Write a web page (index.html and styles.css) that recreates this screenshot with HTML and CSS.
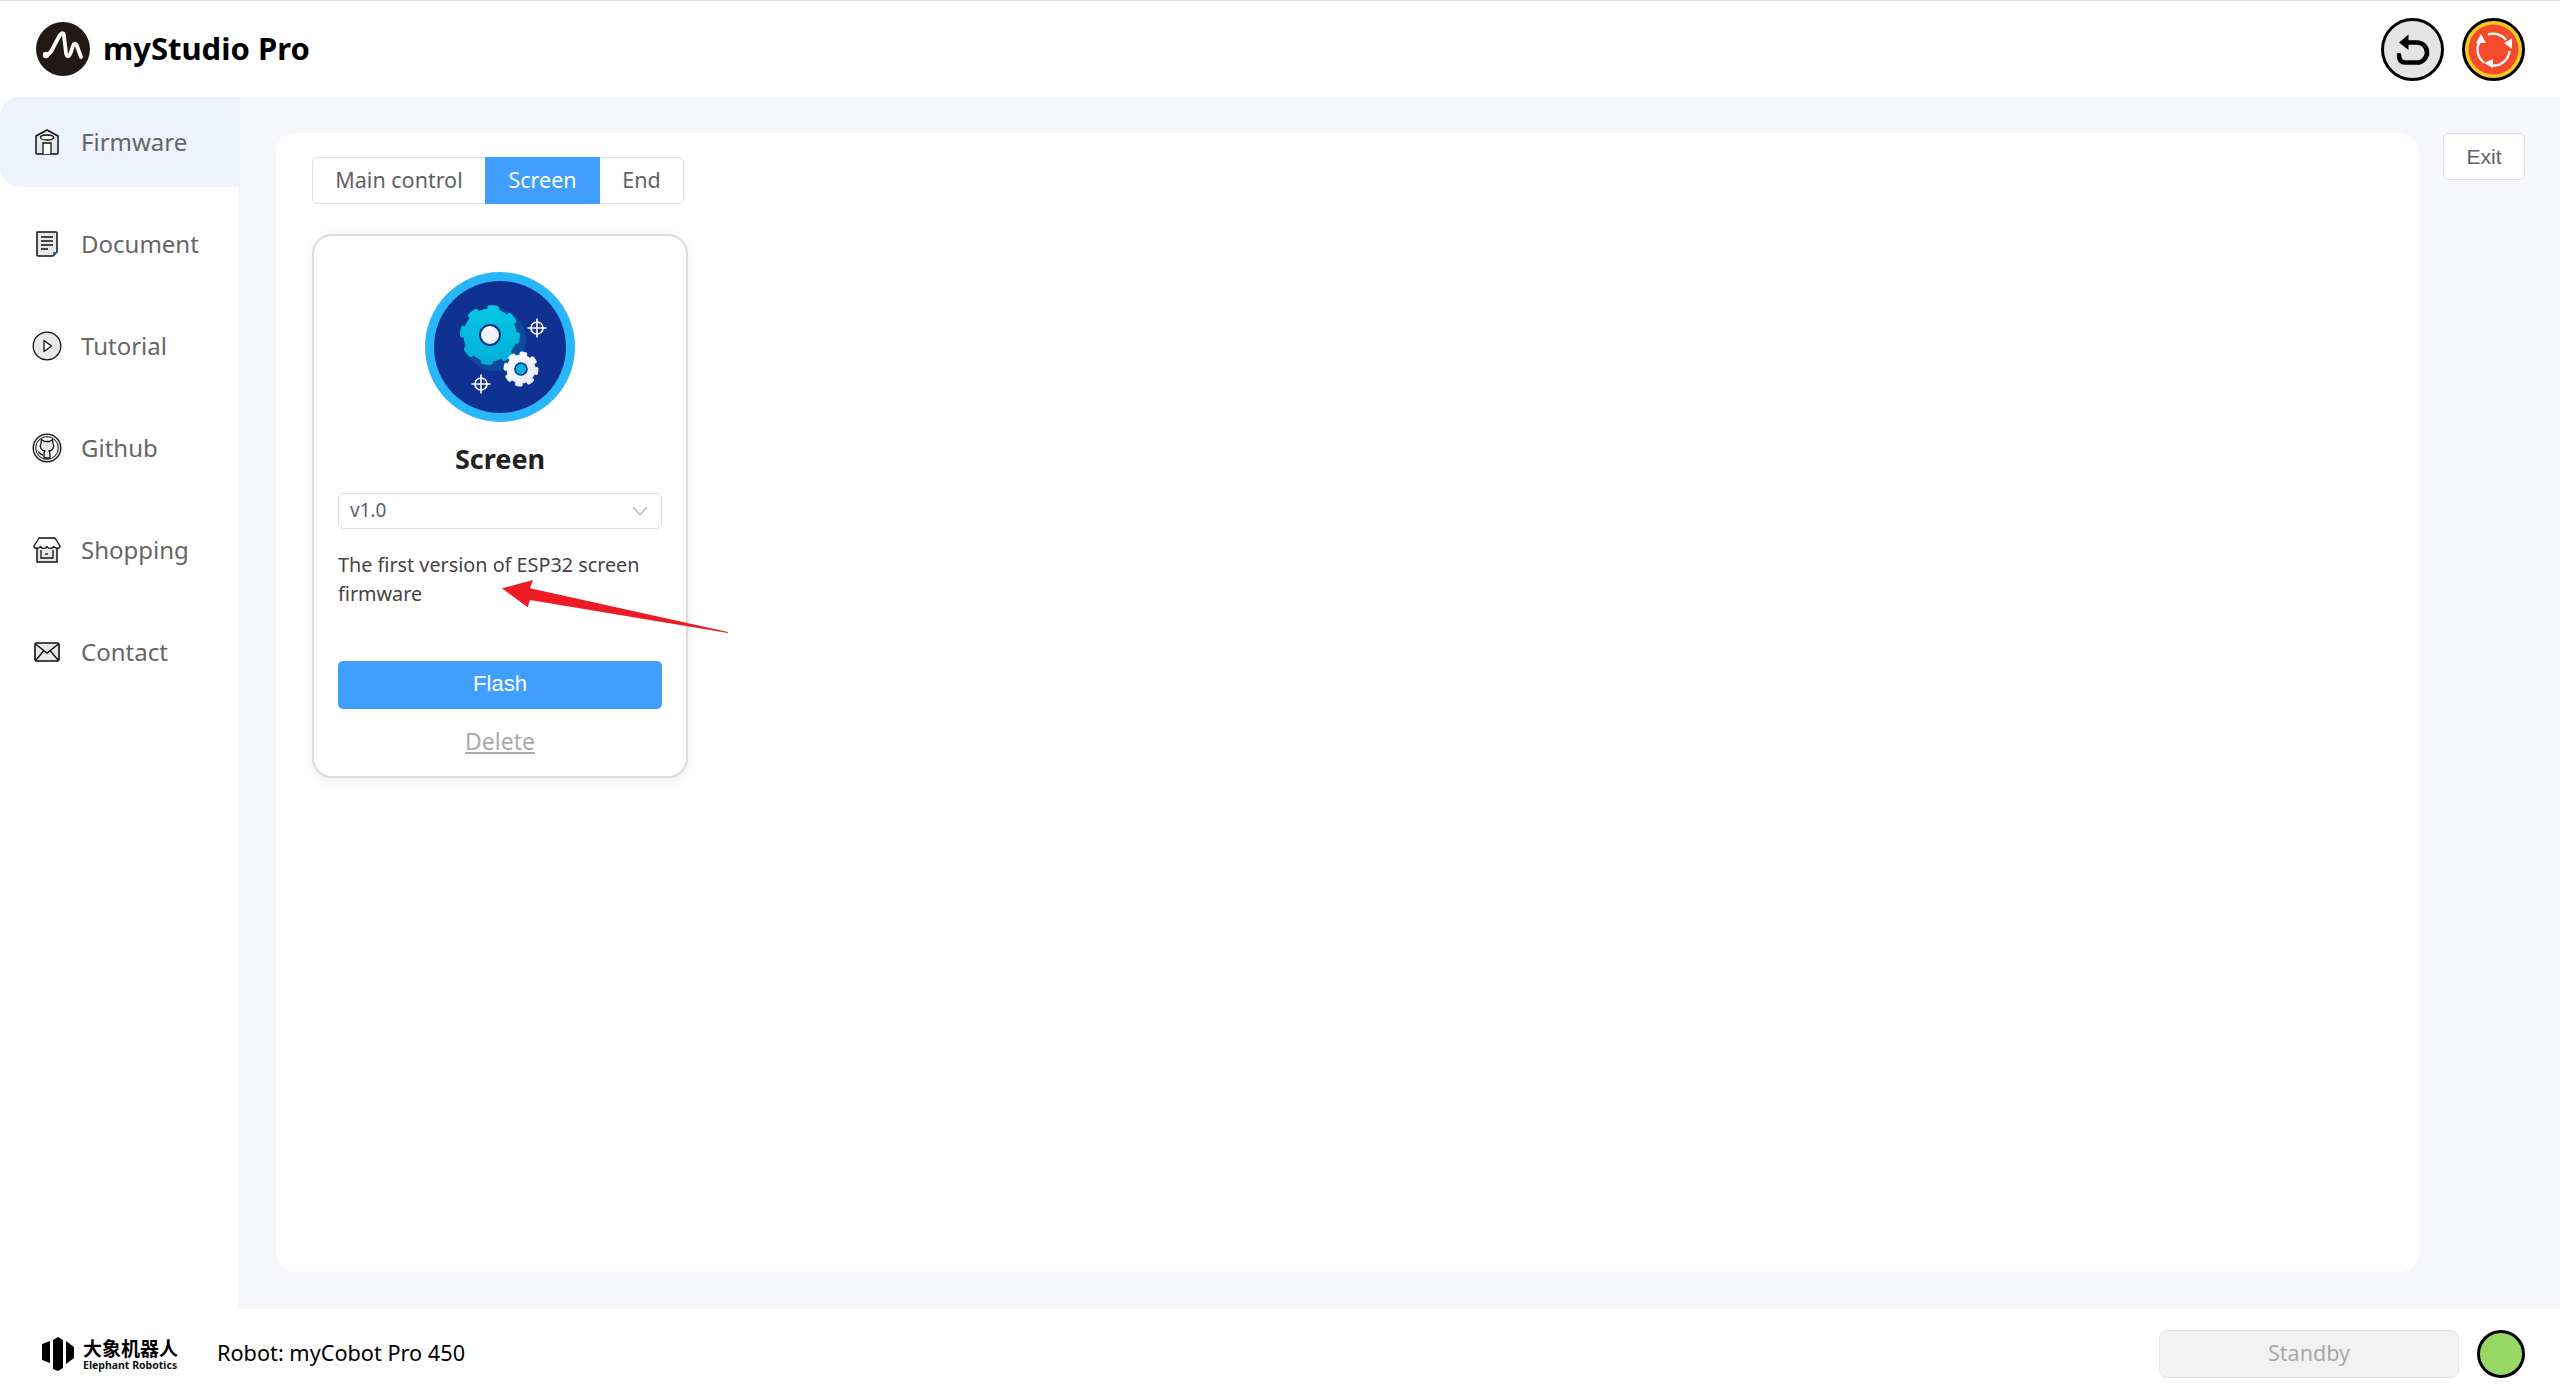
FILE: index.html
```html
<!DOCTYPE html>
<html lang="en">
<head>
<meta charset="utf-8">
<title>myStudio Pro</title>
<link rel="stylesheet" href="styles.css">
</head>
<body>
<div class="app">
  <header class="topbar">
    <div class="brand">
      <svg class="brand-logo" viewBox="0 0 54 54"><circle cx="27" cy="27" r="27" fill="#231815"/><path d="M10 33C14 33 16 28 19 22L24 13C26 10 28 11 28 14L30 31C31 36 33 35 35 30L37 24C38 21 40 21 41 24L45 35" fill="none" stroke="#fff" stroke-width="3.800" stroke-linecap="round" stroke-linejoin="round"/><circle cx="10" cy="33" r="3.200" fill="#fff"/></svg>
      <span class="brand-name">myStudio Pro</span>
    </div>
    <div class="top-actions">
      <svg class="round-btn" viewBox="0 0 63 63"><circle cx="31.500" cy="31.500" r="30" fill="#e4e4e4" stroke="#000" stroke-width="3"/><path d="M26 24.500H36A10 10 0 0 1 36 44.500H24Q18 44.500 18 37" fill="none" stroke="#000" stroke-width="4.600" stroke-linecap="round"/><path d="M27.500 16.500V32L18 24.500z" fill="#000"/></svg>
      <svg class="round-btn" viewBox="0 0 63 63"><circle cx="31.500" cy="31.500" r="30" fill="#f5cb1f" stroke="#000" stroke-width="3"/><circle cx="31.500" cy="31.500" r="25" fill="#f54a2c"/><g fill="none" stroke="#fff" stroke-width="2.400"><path d="M26 16.500A16 16 0 0 1 44 22"/><path d="M47.500 33A16 16 0 0 1 31 47.500"/><path d="M22 44.500A16 16 0 0 1 18 23"/></g><g fill="#fff"><path d="M42 25L50 20.500V31z"/><path d="M22 45L31 41V50z"/><path d="M19 16L14 25H24z"/></g></svg>
    </div>
  </header>
  <div class="middle">
    <nav class="sidebar">
      <a class="nav-item active"><span class="nav-icon"><svg viewBox="0 0 30 30"><path d="M4 9l11-6 11 6v17a1 1 0 0 1-1 1H5a1 1 0 0 1-1-1z" fill="#e8e8e8" stroke="#111" stroke-width="1.500" stroke-linejoin="round"/><ellipse cx="15" cy="10.500" rx="6.500" ry="2.500" fill="#fff" stroke="#111" stroke-width="1.300"/><path d="M11 27V16h8v11" fill="#fff" stroke="#111" stroke-width="1.300"/></svg></span>Firmware</a>
      <a class="nav-item"><span class="nav-icon"><svg viewBox="0 0 30 30"><path d="M5 3h19a1 1 0 0 1 1 1v19l-4 4H6a1 1 0 0 1-1-1z" fill="#e8e8e8" stroke="#111" stroke-width="1.500" stroke-linejoin="round"/><path d="M9 8h12M9 12h12M9 16h12M9 20h7" stroke="#111" stroke-width="1.500"/><path d="M21 27v-4h4z" fill="#2a6fc9"/></svg></span>Document</a>
      <a class="nav-item"><span class="nav-icon"><svg viewBox="0 0 30 30"><circle cx="15" cy="15" r="13.800" fill="#e8e8e8" stroke="#111" stroke-width="1.300"/><path d="M12 9.500l7.500 5.500-7.500 5.500z" fill="#fff" stroke="#111" stroke-width="1.300" stroke-linejoin="round"/></svg></span>Tutorial</a>
      <a class="nav-item"><span class="nav-icon"><svg viewBox="0 0 30 30"><circle cx="15" cy="15" r="13.800" fill="#e8e8e8" stroke="#111" stroke-width="1.300"/><circle cx="15" cy="15" r="11.300" fill="#fff" stroke="#111" stroke-width="1"/><path d="M9.500 6.500l3 2h5l3-2 .5 4c2 3 0 7-4 7.500 1 1 1 2 1 3v4h-6v-4c0-1 0-2 1-3-4-.5-6-4.500-4-7.500z" fill="#e8e8e8" stroke="#111" stroke-width="1.300" stroke-linejoin="round"/><path d="M6 19c2 0 2 3 5 3" fill="none" stroke="#111" stroke-width="1.300"/></svg></span>Github</a>
      <a class="nav-item"><span class="nav-icon"><svg viewBox="0 0 30 30"><path d="M5 12h20v15H5z" fill="#e8e8e8" stroke="#111" stroke-width="1.500"/><path d="M7 3h16l5 8c0 3-5 3-6.500 .5-1 2.500-5 2.500-6.500 0-1.500 2.500-5.500 2.500-6.500 0C7 14 2 14 2 11z" fill="#fff" stroke="#111" stroke-width="1.400" stroke-linejoin="round"/><path d="M9 15v8h12v-8" fill="none" stroke="#111" stroke-width="1.300"/><path d="M13 19h3" stroke="#111" stroke-width="1.300"/></svg></span>Shopping</a>
      <a class="nav-item"><span class="nav-icon"><svg viewBox="0 0 30 30"><rect x="3" y="6" width="24" height="18" rx="1.500" fill="#e8e8e8" stroke="#111" stroke-width="1.600"/><path d="M3.500 7L15 16 26.500 7M3.500 23.500L12 13.500M26.500 23.500L18 13.500" fill="none" stroke="#111" stroke-width="1.400"/></svg></span>Contact</a>
    </nav>
    <main class="workspace">
      <section class="panel">
        <div class="tabs">
          <button class="tab">Main control</button>
          <button class="tab tab-active">Screen</button>
          <button class="tab">End</button>
        </div>
        <article class="card">
          <svg class="card-icon" viewBox="0 0 150 150">
            <defs>
              <linearGradient id="teal" gradientUnits="userSpaceOnUse" x1="0" y1="33" x2="0" y2="93"><stop offset="0" stop-color="#05c8e4"/><stop offset="1" stop-color="#00aed8"/></linearGradient>
              <linearGradient id="pale" gradientUnits="userSpaceOnUse" x1="80" y1="80" x2="112" y2="114"><stop offset="0" stop-color="#fff"/><stop offset="1" stop-color="#dfe8f7"/></linearGradient>
              <linearGradient id="hub" x1="0" y1="0" x2="1" y2="1"><stop offset="0" stop-color="#fff"/><stop offset="1" stop-color="#dfe8f7"/></linearGradient>
            </defs>
            <circle cx="75" cy="75" r="75" fill="#29b6fb"/>
            <circle cx="75" cy="75" r="66" fill="#0f3292"/>
            <circle cx="70" cy="68" r="31" fill="#0d4a9e"/>
            <circle cx="65" cy="63" r="26.500" fill="url(#teal)"/>
            <circle cx="65" cy="63" r="27" fill="none" stroke="url(#teal)" stroke-width="6" stroke-linecap="round" stroke-dasharray="6 15.200"/>
            <circle cx="65" cy="63" r="10" fill="url(#hub)" stroke="#0f3292" stroke-width="2"/>
            <circle cx="96" cy="97" r="14.500" fill="url(#pale)"/>
            <circle cx="96" cy="97" r="15.500" fill="none" stroke="url(#pale)" stroke-width="4" stroke-linecap="round" stroke-dasharray="4 8.170"/>
            <circle cx="96" cy="97" r="6" fill="#00b4da" stroke="#0f3292" stroke-width="1.600"/>
            <g fill="none" stroke="#fff" stroke-width="1.600">
              <circle cx="112" cy="56" r="6"/><path d="M112 46.500v19M102.500 56h19"/>
              <circle cx="56" cy="112" r="6"/><path d="M56 102.500v19M46.500 112h19"/>
            </g>
          </svg>
          <h2 class="card-title">Screen</h2>
          <div class="select"><span>v1.0</span><svg class="chevron" viewBox="0 0 16 10"><path d="M1 1.500l7 7 7-7" fill="none" stroke="#a8abb2" stroke-width="1.200"/></svg></div>
          <p class="card-desc">The first version of ESP32 screen firmware</p>
          <button class="flash">Flash</button>
          <a class="delete">Delete</a>
          <svg class="arrow" viewBox="0 0 226 53"><path d="M0 8.300L31 0 28 8.300 226 52 226 53 28 20 25.700 27.300z" fill="#ed1c24"/></svg>
        </article>
      </section>
      <button class="exit">Exit</button>
    </main>
  </div>
  <footer class="bottombar">
    <div class="company">
      <svg class="company-mark" viewBox="0 0 32 34"><path d="M0 7l8-3v22l-8-3z" fill="#000"/><path d="M11 3l5-3 5 3v28l-5 3-5-2z" fill="#000"/><path d="M24 4l8 6v11l-8 6z" fill="#000"/></svg>
      <div class="company-text"><span class="company-cn">大象机器人</span><span class="company-en">Elephant Robotics</span></div>
    </div>
    <span class="robot">Robot: myCobot Pro 450</span>
    <div class="status">
      <div class="standby">Standby</div>
      <span class="led"></span>
    </div>
  </footer>
</div>
</body>
</html>
```

FILE: styles.css
```css
* { box-sizing: border-box; }
html, body { margin: 0; height: 100%; }
body { font-family: "Noto Sans", "Noto Sans CJK SC", sans-serif; background: #fff; color: #303133; }
.app { height: 1398px; display: flex; flex-direction: column; overflow: hidden; }

.topbar { height: 97px; flex: none; border-top: 1px solid #e2e2e2; display: flex; align-items: center; justify-content: space-between; padding: 0 35px 0 36px; }
.brand { display: flex; align-items: center; gap: 13px; }
.brand-logo { width: 54px; height: 54px; }
.brand-name { font-size: 31px; font-weight: 700; color: #000; padding-bottom: 2px; }
.top-actions { display: flex; gap: 18px; }
.round-btn { width: 63px; height: 63px; display: block; }

.middle { flex: 1; display: flex; min-height: 0; }
.sidebar { width: 240px; flex: none; border-right: 1px solid #eef0f4; display: flex; flex-direction: column; gap: 12px; }
.nav-item { height: 90px; display: flex; align-items: center; gap: 19px; padding-left: 32px; padding-bottom: 1px; font-size: 24px; color: #666; }
.nav-item.active { background: #edf2fc; border-radius: 20px 0 0 20px; }
.nav-icon { width: 30px; height: 30px; flex: none; }
.nav-icon svg { width: 30px; height: 30px; display: block; }

.workspace { flex: 1; background: #f5f7fa; display: flex; align-items: flex-start; padding: 36px 35px 37px 36px; gap: 24px; min-width: 0; }
.panel { flex: 1; align-self: stretch; background: #fff; border-radius: 20px; padding: 24px 36px; }
.exit { width: 82px; height: 47px; flex: none; background: #fff; border: 1px solid #dcdfe6; border-radius: 6px; font-family: "Liberation Sans", sans-serif; font-size: 21px; color: #606266; padding: 0; }

.tabs { display: inline-flex; height: 47px; border: 1px solid #dcdfe6; border-radius: 6px; vertical-align: top; }
.tab { border: 0; background: none; font: inherit; font-size: 21.500px; color: #606266; padding: 0 0 2px; height: 45px; }
.tab:first-child { width: 172px; }
.tab:last-child { width: 83px; }
.tab-active { width: 115px; height: 47px; margin-top: -1px; background: #409eff; color: #fff; }

.card { position: relative; width: 376px; height: 544px; margin: 30px 0 0; border: 2px solid #dcdcdc; border-radius: 20px; box-shadow: 0 3px 12px rgba(0,0,0,.08); background: #fff; padding: 36px 24px 0; display: flex; flex-direction: column; align-items: stretch; }
.card-icon { width: 150px; height: 150px; align-self: center; flex: none; }
.card-title { margin: 16px 0 13px; height: 42px; line-height: 42px; text-align: center; font-size: 27px; font-weight: 700; color: #222; }
.select { height: 36px; border: 1px solid #dcdfe6; border-radius: 5px; display: flex; align-items: center; justify-content: space-between; padding: 0 13px 2px 11px; font-size: 19px; color: #606266; }
.chevron { width: 16px; height: 10px; margin-top: 2px; }
.card-desc { margin: 21px 0 0; height: 111px; font-size: 19.800px; line-height: 29px; color: #444; }
.flash { height: 48px; flex: none; background: #409eff; border: 0; border-radius: 5px; color: #fff; font-family: "Liberation Sans", sans-serif; font-size: 22px; padding: 0 0 3px; }
.delete { margin-top: 16px; text-align: center; font-size: 23px; color: #aaa; text-decoration: underline; }
.arrow { position: absolute; left: 188px; top: 344px; width: 226px; height: 53px; }

.bottombar { height: 89px; flex: none; display: flex; align-items: center; padding: 0 35px 0 42px; }
.company { display: flex; align-items: center; gap: 9px; }
.company-mark { width: 32px; height: 34px; }
.company-text { display: flex; flex-direction: column; width: 95px; }
.company-cn { font-family: "Noto Sans CJK SC", sans-serif; font-size: 19px; font-weight: 700; line-height: 22px; color: #000; white-space: nowrap; }
.company-en { font-family: "Noto Sans", sans-serif; font-size: 10.500px; font-weight: 700; line-height: 12px; color: #111; white-space: nowrap; }
.robot { margin-left: 39px; font-size: 21.700px; color: #000; padding-bottom: 3px; }
.status { margin-left: auto; display: flex; align-items: center; gap: 18px; }
.standby { width: 300px; height: 48px; background: #f2f2f2; border: 1px solid #e4e4e4; border-radius: 8px; display: flex; align-items: center; justify-content: center; font-size: 21.500px; color: #a8a8a8; padding-bottom: 3px; }
.led { width: 48px; height: 48px; border-radius: 50%; background: #96d865; border: 3px solid #000; }
```
